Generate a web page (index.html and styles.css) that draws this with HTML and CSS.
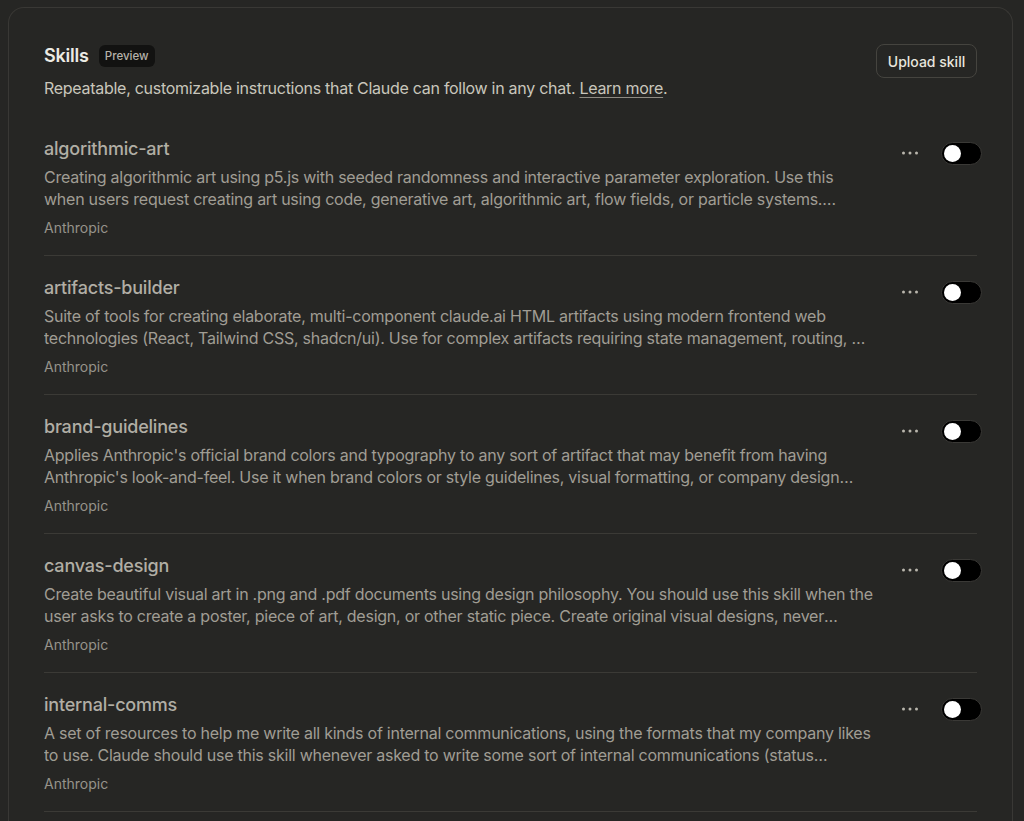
FILE: index.html
```html
<!DOCTYPE html>
<html lang="en">
<head>
<meta charset="utf-8">
<title>Skills</title>
<link rel="stylesheet" href="styles.css">
</head>
<body>
<section class="card">
  <header class="head">
    <div class="head-text">
      <div class="title-row">
        <h1 class="title">Skills</h1>
        <span class="badge">Preview</span>
      </div>
      <p class="lead">Repeatable, customizable instructions that Claude can follow in any chat. <a class="link" href="#">Learn more</a>.</p>
    </div>
    <button class="upload">Upload skill</button>
  </header>

  <ul class="list">
    <li class="item">
      <div class="main">
        <div class="name">algorithmic-art</div>
        <p class="desc">Creating algorithmic art using p5.js with seeded randomness and interactive parameter exploration. Use this when users request creating art using code, generative art, algorithmic art, flow fields, or particle systems. Create original algorithmic art rather than copying existing artists' work to avoid copyright violations.</p>
        <div class="author">Anthropic</div>
      </div>
      <div class="controls">
        <button class="more" aria-label="More"><svg width="16" height="4" viewBox="0 0 16 4"><circle cx="1.5" cy="2" r="1.5"/><circle cx="8" cy="2" r="1.5"/><circle cx="14.5" cy="2" r="1.5"/></svg></button>
        <span class="toggle"><span class="knob"></span></span>
      </div>
    </li>
    <li class="item">
      <div class="main">
        <div class="name">artifacts-builder</div>
        <p class="desc">Suite of tools for creating elaborate, multi-component claude.ai HTML artifacts using modern frontend web technologies (React, Tailwind CSS, shadcn/ui). Use for complex artifacts requiring state management, routing, or shadcn/ui components - not for simple single-file HTML/JSX artifacts.</p>
        <div class="author">Anthropic</div>
      </div>
      <div class="controls">
        <button class="more" aria-label="More"><svg width="16" height="4" viewBox="0 0 16 4"><circle cx="1.5" cy="2" r="1.5"/><circle cx="8" cy="2" r="1.5"/><circle cx="14.5" cy="2" r="1.5"/></svg></button>
        <span class="toggle"><span class="knob"></span></span>
      </div>
    </li>
    <li class="item">
      <div class="main">
        <div class="name">brand-guidelines</div>
        <p class="desc">Applies Anthropic's official brand colors and typography to any sort of artifact that may benefit from having Anthropic's look-and-feel. Use it when brand colors or style guidelines, visual formatting, or company design standards apply.</p>
        <div class="author">Anthropic</div>
      </div>
      <div class="controls">
        <button class="more" aria-label="More"><svg width="16" height="4" viewBox="0 0 16 4"><circle cx="1.5" cy="2" r="1.5"/><circle cx="8" cy="2" r="1.5"/><circle cx="14.5" cy="2" r="1.5"/></svg></button>
        <span class="toggle"><span class="knob"></span></span>
      </div>
    </li>
    <li class="item">
      <div class="main">
        <div class="name">canvas-design</div>
        <p class="desc">Create beautiful visual art in .png and .pdf documents using design philosophy. You should use this skill when the user asks to create a poster, piece of art, design, or other static piece. Create original visual designs, never copying existing artists' work to avoid copyright violations.</p>
        <div class="author">Anthropic</div>
      </div>
      <div class="controls">
        <button class="more" aria-label="More"><svg width="16" height="4" viewBox="0 0 16 4"><circle cx="1.5" cy="2" r="1.5"/><circle cx="8" cy="2" r="1.5"/><circle cx="14.5" cy="2" r="1.5"/></svg></button>
        <span class="toggle"><span class="knob"></span></span>
      </div>
    </li>
    <li class="item">
      <div class="main">
        <div class="name">internal-comms</div>
        <p class="desc">A set of resources to help me write all kinds of internal communications, using the formats that my company likes to use. Claude should use this skill whenever asked to write some sort of internal communications (status reports, leadership updates, 3P updates, company newsletters, FAQs, incident reports, project updates, etc.).</p>
        <div class="author">Anthropic</div>
      </div>
      <div class="controls">
        <button class="more" aria-label="More"><svg width="16" height="4" viewBox="0 0 16 4"><circle cx="1.5" cy="2" r="1.5"/><circle cx="8" cy="2" r="1.5"/><circle cx="14.5" cy="2" r="1.5"/></svg></button>
        <span class="toggle"><span class="knob"></span></span>
      </div>
    </li>
    <li class="item">
      <div class="main">
        <div class="name">mcp-builder</div>
        <p class="desc">Guide for creating high-quality MCP (Model Context Protocol) servers that enable LLMs to interact with external services through well-designed tools.</p>
        <div class="author">Anthropic</div>
      </div>
      <div class="controls">
        <button class="more" aria-label="More"><svg width="16" height="4" viewBox="0 0 16 4"><circle cx="1.5" cy="2" r="1.5"/><circle cx="8" cy="2" r="1.5"/><circle cx="14.5" cy="2" r="1.5"/></svg></button>
        <span class="toggle"><span class="knob"></span></span>
      </div>
    </li>
  </ul>
</section>
</body>
</html>
```

FILE: styles.css
```css
* { box-sizing: border-box; }
html, body {
  margin: 0;
  padding: 0;
  background: #262624;
  height: 100%;
  overflow: hidden;
}
body {
  font-family: Inter, "Noto Sans", "Liberation Sans", sans-serif;
  color: #c3c0b6;
  padding: 7px 11px 0 8px;
}
.card {
  border: 1px solid #393835;
  border-bottom: none;
  border-radius: 16px 16px 0 0;
  padding: 36px 35px 0 35px;
  min-height: 900px;
}
.head {
  display: flex;
  justify-content: space-between;
  align-items: flex-start;
}
.head-text {
  display: flex;
  flex-direction: column;
  gap: 8px;
}
.title-row {
  display: flex;
  align-items: center;
  gap: 10px;
  height: 24px;
}
.title {
  margin: 0;
  font-size: 18px;
  font-weight: 600;
  color: #ecebe4;
  line-height: 24px;
  letter-spacing: -0.2px;
}
.badge {
  display: inline-flex;
  align-items: center;
  height: 22px;
  padding: 0 6px;
  border-radius: 6px;
  background: #121211;
  color: #b6b3aa;
  font-size: 11.5px;
  font-weight: 500;
}
.lead {
  margin: 0;
  font-size: 16px;
  line-height: 24px;
  color: #c9c6bc;
  letter-spacing: -0.28px;
}
.link {
  color: #c9c6bc;
  text-decoration: underline;
  text-underline-offset: 3px;
  text-decoration-color: #8e8b83;
}
.upload {
  height: 34px;
  width: 101px;
  border: 1px solid #45443f;
  border-radius: 8px;
  background: #262624;
  color: #e8e6de;
  font-family: inherit;
  font-size: 14px;
  font-weight: 500;
  padding: 0;
}
.list {
  list-style: none;
  margin: 17px 0 0 0;
  padding: 0;
}
.item {
  display: flex;
  gap: 21px;
  padding: 20px 0 17px 0;
  border-bottom: 1px solid #3b3a36;
}
.main {
  flex: 1;
  min-width: 0;
  display: flex;
  flex-direction: column;
}
.name {
  font-size: 18px;
  line-height: 24px;
  font-weight: 500;
  color: #b1aea5;
  letter-spacing: -0.2px;
}
.desc {
  margin: 5px 0 0 0;
  font-size: 16px;
  line-height: 22px;
  color: #a09d94;
  letter-spacing: -0.25px;
  display: -webkit-box;
  -webkit-line-clamp: 2;
  -webkit-box-orient: vertical;
  overflow: hidden;
}
.author {
  margin-top: 8px;
  font-size: 14px;
  line-height: 20px;
  color: #96938b;
}
.controls {
  flex: none;
  display: flex;
  align-items: center;
  gap: 15px;
  margin-right: -5px;
  height: 32px;
}
.more {
  width: 32px;
  height: 32px;
  padding: 0;
  border: none;
  background: transparent;
  display: flex;
  align-items: center;
  justify-content: center;
}
.more svg { fill: #b9b6ad; }
.toggle {
  width: 41px;
  height: 23px;
  border-radius: 12px;
  background: #000;
  border: 1px solid #3a3936;
  display: flex;
  align-items: center;
  padding-left: 2px;
}
.knob {
  width: 17px;
  height: 17px;
  border-radius: 50%;
  background: #fff;
}
```
